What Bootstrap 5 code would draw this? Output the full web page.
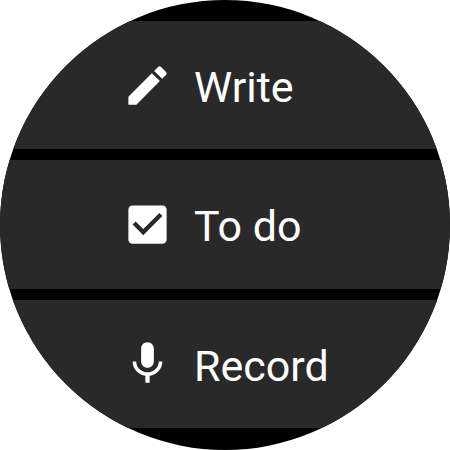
<!DOCTYPE html>
<html lang="en">
<head>
<meta charset="utf-8">
<meta name="viewport" content="width=device-width, initial-scale=1">
<title>Notes</title>
<link href="https://cdn.jsdelivr.net/npm/bootstrap@5.3.0/dist/css/bootstrap.min.css" rel="stylesheet">
<style>
body { font-family: Roboto, sans-serif; background: #fff; }
.watch-face { width: 100vmin; aspect-ratio: 1; background: #000; padding: 21px 0 22px; gap: 11px; }
.action-row { background: #292929; color: #fff; font-size: 43px; line-height: 48px; padding: 0 24px 0 122px; gap: 21px; flex: 1 1 0; }
.action-row:focus-visible { outline: 3px solid #8ab4f8; outline-offset: -6px; }
.action-icon { width: 51px; height: 51px; fill: #fff; }
.action-label { padding-top: 4px; }
</style>
</head>
<body>
<main class="watch-face d-flex flex-column rounded-circle overflow-hidden mx-auto">
  <button type="button" class="action-row d-flex align-items-center border-0 w-100 text-start">
    <svg class="action-icon flex-shrink-0" viewBox="0 0 24 24" aria-hidden="true"><path d="M3 17.25V21h3.75L17.81 9.94l-3.75-3.75L3 17.25zM20.71 7.04a1 1 0 0 0 0-1.41l-2.34-2.34a1 1 0 0 0-1.41 0l-1.83 1.83 3.75 3.75 1.83-1.83z"/></svg>
    <span class="action-label">Write</span>
  </button>
  <button type="button" class="action-row d-flex align-items-center border-0 w-100 text-start">
    <svg class="action-icon flex-shrink-0" viewBox="0 0 24 24" aria-hidden="true"><path d="M19 3H5a2 2 0 0 0-2 2v14a2 2 0 0 0 2 2h14a2 2 0 0 0 2-2V5a2 2 0 0 0-2-2zm-9 14l-5-5 1.41-1.41L10 14.17l7.59-7.59L19 8l-9 9z"/></svg>
    <span class="action-label">To do</span>
  </button>
  <button type="button" class="action-row d-flex align-items-center border-0 w-100 text-start">
    <svg class="action-icon flex-shrink-0" viewBox="0 0 24 24" aria-hidden="true"><path d="M12 14c1.66 0 3-1.34 3-3V5c0-1.66-1.34-3-3-3S9 3.34 9 5v6c0 1.66 1.34 3 3 3zm5.3-3c0 3-2.54 5.1-5.3 5.1S6.7 14 6.7 11H5c0 3.41 2.72 6.23 6 6.72V21h2v-3.28c3.28-.48 6-3.3 6-6.72h-1.7z"/></svg>
    <span class="action-label">Record</span>
  </button>
</main>
<script src="https://cdn.jsdelivr.net/npm/bootstrap@5.3.0/dist/js/bootstrap.bundle.min.js"></script>
</body>
</html>
